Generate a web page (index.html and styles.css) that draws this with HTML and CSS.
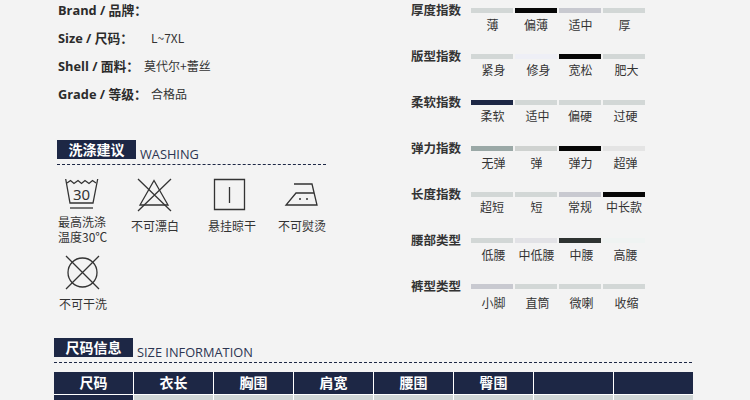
FILE: index.html
```html
<!DOCTYPE html>
<html lang="zh-CN">
<head>
<meta charset="utf-8">
<title>尺码信息</title>
<link rel="stylesheet" href="styles.css">
</head>
<body>
<div class="top">
  <div class="left">
    <dl class="specs">
      <div class="spec"><dt>Brand / 品牌：</dt><dd></dd></div>
      <div class="spec"><dt>Size / 尺码：</dt><dd class="indent">L~7XL</dd></div>
      <div class="spec"><dt>Shell / 面料：</dt><dd>莫代尔+蕾丝</dd></div>
      <div class="spec"><dt>Grade / 等级：</dt><dd class="indent">合格品</dd></div>
    </dl>
    <div class="head head-wash"><h2>洗涤建议</h2><span>WASHING</span></div>
    <div class="care">
      <figure class="care-item item-tub">
        <svg class="icon" width="48" height="34" viewBox="0 0 48 34">
          <path class="ln" d="M7.700 1 L12 25 H35 L39.700 1"/>
          <path class="ln" d="M9 5 L12.500 2.500 L16 5.500 L20 2.500 L23.500 5.500 L27 2.500 L31 5.500 L34.500 2.500 L38 5"/>
          <path class="ln" d="M12 30 H35"/>
          <text class="num" x="23.500" y="22">30</text>
        </svg>
        <figcaption>最高洗涤<br>温度30℃</figcaption>
      </figure>
      <figure class="care-item">
        <svg class="icon" width="48" height="34" viewBox="0 0 48 34">
          <path class="ln" d="M23 2.500 L9 27 H37 Z"/>
          <path class="ln" d="M7 1 L40 33 M40 1 L7 33"/>
        </svg>
        <figcaption>不可漂白</figcaption>
      </figure>
      <figure class="care-item">
        <svg class="icon" width="48" height="34" viewBox="0 0 48 34">
          <path class="ln" d="M6.500 1.500 H36.500 V31.500 H6.500 Z"/>
          <path class="ln" d="M21.500 9 V25"/>
        </svg>
        <figcaption>悬挂晾干</figcaption>
      </figure>
      <figure class="care-item">
        <svg class="icon" width="48" height="34" viewBox="0 0 48 34">
          <path class="ln" d="M16 6 H34 L39 27 H8 L18 15 H36"/>
          <circle class="dot" cx="22" cy="21" r="1"/>
          <circle class="dot" cx="29" cy="21" r="1"/>
        </svg>
        <figcaption>不可熨烫</figcaption>
      </figure>
      <figure class="care-item item-circle">
        <svg class="icon" width="48" height="36" viewBox="0 0 48 36">
          <circle class="ln" cx="23.500" cy="17.500" r="14.500"/>
          <path class="ln" d="M7 1 L40 34 M40 1 L7 34"/>
        </svg>
        <figcaption>不可干洗</figcaption>
      </figure>
    </div>
  </div>
  <div class="right">
    <section class="gauge">
      <h3>厚度指数</h3>
      <div class="opt"><i class="bar g1"></i><span class="push1">薄</span></div>
      <div class="opt"><i class="bar k"></i><span>偏薄</span></div>
      <div class="opt"><i class="bar g2"></i><span class="push1">适中</span></div>
      <div class="opt"><i class="bar g1"></i><span class="push1">厚</span></div>
    </section>
    <section class="gauge up1">
      <h3>版型指数</h3>
      <div class="opt"><i class="bar g1"></i><span class="push2">紧身</span></div>
      <div class="opt"><i class="bar p"></i><span class="push3">修身</span></div>
      <div class="opt"><i class="bar k"></i><span class="push1">宽松</span></div>
      <div class="opt"><i class="bar g1"></i><span class="push3">肥大</span></div>
    </section>
    <section class="gauge up1">
      <h3>柔软指数</h3>
      <div class="opt"><i class="bar n"></i><span class="push1">柔软</span></div>
      <div class="opt"><i class="bar g1"></i><span class="push2">适中</span></div>
      <div class="opt"><i class="bar g1"></i><span>偏硬</span></div>
      <div class="opt"><i class="bar g1"></i><span class="push2">过硬</span></div>
    </section>
    <section class="gauge">
      <h3>弹力指数</h3>
      <div class="opt"><i class="bar s"></i><span class="push2">无弹</span></div>
      <div class="opt"><i class="bar g3"></i><span class="push1">弹</span></div>
      <div class="opt"><i class="bar k"></i><span class="push1">弹力</span></div>
      <div class="opt"><i class="bar l"></i><span class="push2">超弹</span></div>
    </section>
    <section class="gauge up2">
      <h3>长度指数</h3>
      <div class="opt"><i class="bar g1"></i><span>超短</span></div>
      <div class="opt"><i class="bar g1"></i><span class="push1">短</span></div>
      <div class="opt"><i class="bar g2"></i><span>常规</span></div>
      <div class="opt"><i class="bar k"></i><span>中长款</span></div>
    </section>
    <section class="gauge">
      <h3>腰部类型</h3>
      <div class="opt"><i class="bar g1"></i><span class="push2">低腰</span></div>
      <div class="opt"><i class="bar l2"></i><span class="push1">中低腰</span></div>
      <div class="opt"><i class="bar d"></i><span class="push2">中腰</span></div>
      <div class="opt"><i class="bar w"></i><span class="push2">高腰</span></div>
    </section>
    <section class="gauge down2">
      <h3>裤型类型</h3>
      <div class="opt"><i class="bar g2"></i><span class="push2">小脚</span></div>
      <div class="opt"><i class="bar g1"></i><span class="push2">直筒</span></div>
      <div class="opt"><i class="bar g1"></i><span class="push2">微喇</span></div>
      <div class="opt"><i class="bar g1"></i><span class="push3">收缩</span></div>
    </section>
  </div>
</div>
<div class="size">
  <div class="head head-size"><h2>尺码信息</h2><span>SIZE INFORMATION</span></div>
  <table class="size-table">
    <tr><th>尺码</th><th>衣长</th><th>胸围</th><th>肩宽</th><th>腰围</th><th>臀围</th><th></th><th></th></tr>
    <tr><th></th><td></td><td></td><td></td><td></td><td></td><td></td><td></td></tr>
  </table>
</div>
</body>
</html>
```
FILE: styles.css
```css
html, body {
  margin: 0;
  height: 400px;
  overflow: hidden;
  background: #f3f3f3;
}
body {
  font: 12px/14px "Noto Sans CJK SC", "Noto Sans", sans-serif;
  color: #333;
}
.top {
  display: flex;
  height: 338px;
  padding-left: 57px;
}
.left {
  width: 354px;
  flex: none;
}
.specs {
  margin: 0 0 0 1px;
  display: flex;
  flex-direction: column;
  gap: 8px;
}
.spec {
  display: flex;
  height: 20px;
  line-height: 20px;
}
.spec dt {
  width: 86px;
  font: bold 12.800px/20px "Open Sans", "Noto Sans CJK SC", sans-serif;
  color: #2b2b2b;
  white-space: nowrap;
}
.spec dd {
  margin: 0;
}
.spec .indent {
  padding-left: 7px;
}
.head {
  display: flex;
  align-items: flex-start;
  border-bottom: 1px dashed #1d2745;
}
.head h2 {
  width: 79px;
  height: 19px;
  margin: 0;
  background: #1d2745;
  color: #fff;
  font: bold 14px/19px "Noto Sans CJK SC", sans-serif;
  text-align: center;
}
.head span {
  margin: 6px 0 0 4px;
  font: 12.800px/16px "Open Sans", sans-serif;
  color: #2c3552;
}
.head-wash {
  width: 269px;
  height: 24px;
  margin-top: 36px;
}
.care {
  display: grid;
  grid-template-columns: 73px 77px 70px 70px;
  grid-template-rows: 77px auto;
  margin: 13px 0 0 1px;
}
.care-item {
  margin: 0;
  width: 48px;
  text-align: center;
  color: #333;
  line-height: 15px;
}
.icon {
  display: block;
  overflow: visible;
}
.care-item figcaption {
  margin-top: 6px;
  white-space: nowrap;
}
.item-tub figcaption {
  margin-top: 2px;
}
.item-circle {
  margin-left: 1px;
}
.item-circle figcaption {
  margin-top: 5px;
}
.ln {
  fill: none;
  stroke: #333;
  stroke-width: 1.300;
}
.dot {
  fill: #333;
}
.num {
  font: 15px "Noto Sans", sans-serif;
  fill: #333;
  text-anchor: middle;
}
.right {
  width: 240px;
  flex: none;
}
.gauge {
  display: flex;
  gap: 2px;
  height: 46px;
  box-sizing: border-box;
  padding-top: 8px;
}
.gauge h3 {
  width: 58px;
  margin: 0;
  height: 5px;
  font: bold 12.500px/3px "Noto Sans CJK SC", sans-serif;
  color: #333;
  white-space: nowrap;
}
.opt {
  width: 42px;
}
.bar {
  display: block;
  height: 5px;
}
.opt span {
  display: block;
  margin-top: 5px;
  text-align: center;
  white-space: nowrap;
}
.up1 .opt span { margin-top: 4px; }
.up2 .opt span { margin-top: 3px; }
.down2 .opt span { margin-top: 7px; }
.push1 { padding-left: 1px; }
.push2 { padding-left: 3px; }
.push3 { padding-left: 5px; }
.g1 { background: #d2d7d6; }
.g2 { background: #c8c9d0; }
.g3 { background: #cfd2d0; }
.k { background: #060606; }
.p { background: #eeeff6; }
.n { background: #1d2745; }
.s { background: #9aa8a6; }
.l { background: #e4e4e4; }
.l2 { background: #e2e2e6; }
.d { background: #2e3331; }
.w { background: #eff3f2; }
.size {
  padding-left: 54px;
}
.head-size {
  width: 638px;
  height: 24px;
}
.size-table {
  border-collapse: collapse;
  table-layout: fixed;
  width: 639px;
  margin-top: 9px;
}
.size-table th,
.size-table td {
  padding: 0;
  width: 79px;
  height: 22px;
  border-left: 1px solid #fff;
  border-bottom: 1px solid #fff;
}
.size-table th {
  background: #1d2745;
  color: #fff;
  font: bold 14px/20px "Noto Sans CJK SC", sans-serif;
  text-align: center;
  vertical-align: top;
}
.size-table td {
  background: #d0d6d6;
}
.size-table tr > :first-child {
  border-left: 0;
}
```
